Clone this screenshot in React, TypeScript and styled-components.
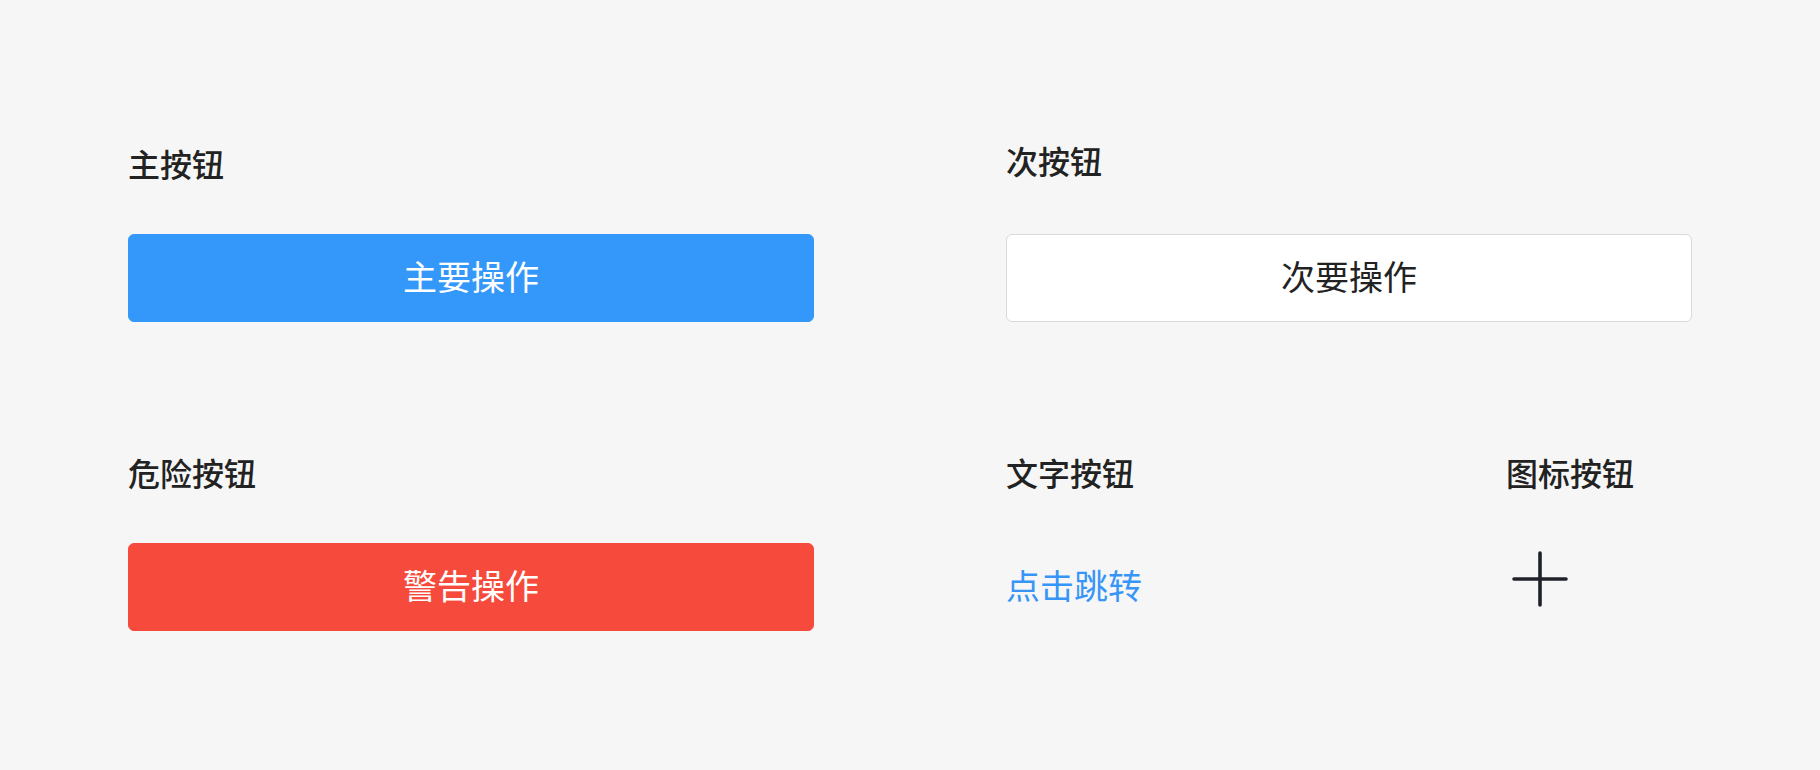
import styled, { createGlobalStyle } from 'styled-components';

const GlobalStyle = createGlobalStyle`
    html, body {
        margin: 0;
        padding: 0;
        background-color: #f6f6f6;
    }
    body {
        font-family: 'Noto Sans CJK SC', 'Noto Sans', sans-serif;
        color: #222222;
        min-height: 770px;
    }
`;

const Page = styled.div`
    display: grid;
    grid-template-columns: 686px 686px;
    align-content: start;
    column-gap: 192px;
    row-gap: 134px;
    padding: 147px 0 0 128px;
`;

const Section = styled.section`
    display: flex;
    flex-direction: column;
    gap: 55px;
`;

const Split = styled.div`
    display: grid;
    grid-template-columns: 500px 1fr;
`;

const Title = styled.h3<{ $lift?: boolean }>`
    margin: ${(p) => (p.$lift ? '-3px 0 3px' : '0')};
    font-size: 32px;
    line-height: 32px;
    font-weight: 500;
    color: #222222;
`;

const Button = styled.button<{ $variant: 'primary' | 'secondary' | 'danger' }>`
    width: 100%;
    height: 88px;
    padding: 0 0 5px;
    border-radius: 6px;
    font-family: inherit;
    font-size: 34px;
    font-weight: 400;
    cursor: pointer;
    border: 1px solid
        ${(p) => (p.$variant === 'primary' ? '#3497fa' : p.$variant === 'danger' ? '#f64a3c' : '#dadada')};
    background-color: ${(p) =>
        p.$variant === 'primary' ? '#3497fa' : p.$variant === 'danger' ? '#f64a3c' : '#ffffff'};
    color: ${(p) => (p.$variant === 'secondary' ? '#222222' : '#ffffff')};
`;

const TextButton = styled.button`
    height: 88px;
    padding: 0 0 5px;
    border: none;
    background: none;
    font-family: inherit;
    font-size: 34px;
    color: #3795f7;
    cursor: pointer;
    text-align: left;
    align-self: flex-start;
`;

const IconButton = styled.button`
    width: 56px;
    height: 56px;
    margin: 8px 0 0 6px;
    padding: 0;
    border: none;
    background: none;
    cursor: pointer;
    display: flex;
    align-items: center;
    justify-content: center;
`;

const PlusIcon = () => (
    <svg width="56" height="56" viewBox="0 0 56 56" fill="none">
        <path d="M28 2v52M2 28h52" stroke="#1f2329" strokeWidth="3.6" strokeLinecap="round" />
    </svg>
);

const App = () => {
    return (
        <>
            <GlobalStyle />
            <Page>
                <Section>
                    <Title>主按钮</Title>
                    <Button $variant="primary">主要操作</Button>
                </Section>
                <Section>
                    <Title $lift>次按钮</Title>
                    <Button $variant="secondary">次要操作</Button>
                </Section>
                <Section>
                    <Title>危险按钮</Title>
                    <Button $variant="danger">警告操作</Button>
                </Section>
                <Split>
                    <Section>
                        <Title>文字按钮</Title>
                        <TextButton>点击跳转</TextButton>
                    </Section>
                    <Section>
                        <Title>图标按钮</Title>
                        <IconButton aria-label="添加">
                            <PlusIcon />
                        </IconButton>
                    </Section>
                </Split>
            </Page>
        </>
    );
};

export default App;
